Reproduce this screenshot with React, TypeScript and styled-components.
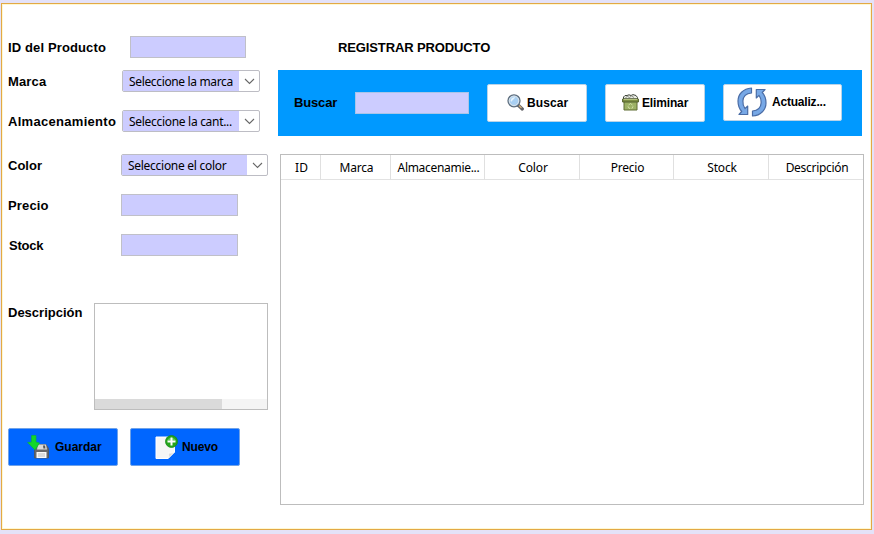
import React from "react";
import styled, { createGlobalStyle } from "styled-components";

const GlobalStyle = createGlobalStyle`
  *, *::before, *::after { box-sizing: border-box; }
  body { margin: 0; background: #e4e2f8; }
`;

const Desktop = styled.div`
  width: 874px;
  height: 534px;
  padding: 3px 2px 4px 1px;
  background: #e4e2f8;
  font-family: "Liberation Sans", Arial, sans-serif;
  color: #000;
`;

const Frame = styled.main`
  display: flex;
  width: 871px;
  height: 527px;
  border: 1px solid #e3a945;
  box-shadow: inset 0 0 0 1px #fff8d2;
  background: #fff;
`;

const FormColumn = styled.form`
  display: flex;
  flex-direction: column;
  flex: none;
  width: 276px;
  padding: 32px 0 0 6px;
`;

const FieldRow = styled.div<{ $gap?: number }>`
  display: flex;
  align-items: flex-start;
  margin-top: ${(p) => p.$gap ?? 0}px;
`;

const Label = styled.label<{ $width: number; $spacing?: number; $indent?: number; $line?: number }>`
  flex: none;
  width: ${(p) => p.$width}px;
  height: 22px;
  padding-left: ${(p) => p.$indent ?? 0}px;
  font-size: 13px;
  font-weight: bold;
  line-height: ${(p) => p.$line ?? 24}px;
  white-space: nowrap;
  letter-spacing: ${(p) => p.$spacing ?? 0}px;
`;

const TextField = styled.input<{ $width: number; $border?: string }>`
  flex: none;
  width: ${(p) => p.$width}px;
  height: 22px;
  padding: 0 6px;
  border: 1px solid ${(p) => p.$border ?? "#c0c0c8"};
  border-radius: 0;
  background: #ccccff;
  outline: none;
`;

const Combo = styled.div<{ $width: number }>`
  display: flex;
  flex: none;
  width: ${(p) => p.$width}px;
  height: 22px;
  border: 1px solid #bdbdc4;
  border-radius: 2px;
  background: #fff;
  overflow: hidden;
`;

const ComboValue = styled.span<{ $spacing: number }>`
  flex: 1;
  padding-left: 6px;
  background: #ccccff;
  font: 12px/21px "Noto Sans", "Open Sans", sans-serif;
  letter-spacing: ${(p) => p.$spacing}px;
  white-space: nowrap;
`;

const ComboArrow = styled.span`
  display: flex;
  align-items: center;
  justify-content: center;
  width: 20px;
`;

const DescriptionBox = styled.div`
  display: flex;
  flex-direction: column;
  justify-content: flex-end;
  width: 174px;
  height: 107px;
  border: 1px solid #bdbdbd;
  background: #fff;
`;

const ScrollTrack = styled.div`
  height: 10px;
  background: #f4f4f4;
`;

const ScrollThumb = styled.div`
  width: 127px;
  height: 10px;
  background: #dadada;
`;

const Actions = styled.div`
  display: flex;
  gap: 12px;
  margin-top: 18px;
`;

const Button = styled.button<{
  $width: number;
  $height?: number;
  $primary?: boolean;
  $left: number;
  $gap: number;
  $spacing?: number;
}>`
  display: flex;
  align-items: center;
  flex: none;
  width: ${(p) => p.$width}px;
  height: ${(p) => p.$height ?? 38}px;
  padding: 0 0 0 ${(p) => p.$left}px;
  gap: ${(p) => p.$gap}px;
  border: 1px solid ${(p) => (p.$primary ? "#6fa2e8" : "#b9d3e8")};
  border-radius: 2px;
  background: ${(p) => (p.$primary ? "#0066ff" : "#fff")};
  color: #000;
  font: bold 12px/16px "Liberation Sans", Arial, sans-serif;
  letter-spacing: ${(p) => p.$spacing ?? 0.1}px;
  white-space: nowrap;

  svg { flex: none; }
`;

const ListColumn = styled.section`
  display: flex;
  flex-direction: column;
  flex: none;
  width: 586px;
  padding-top: 32px;
`;

const Title = styled.h1`
  height: 22px;
  margin: 0 0 0 60px;
  font-size: 13px;
  font-weight: bold;
  line-height: 24px;
  letter-spacing: -0.12px;
`;

const SearchBar = styled.div`
  display: flex;
  align-items: center;
  width: 584px;
  height: 66px;
  margin-top: 12px;
  padding: 0 0 1px 16px;
  background: #0099ff;
`;

const Buttons = styled.div`
  display: flex;
  align-items: flex-start;
  gap: 18px;
  margin-left: 18px;
`;

const Table = styled.div`
  width: 584px;
  height: 351px;
  margin: 18px 0 0 2px;
  border: 1px solid #bdbdbd;
  background: #fff;
`;

const HeaderRow = styled.div`
  display: grid;
  grid-template-columns: 40px 70px 94px 95px 94px 95px 94px;
  height: 25px;
  border-bottom: 1px solid #e2e2e2;
`;

const HeaderCell = styled.div<{ $spacing: number }>`
  padding-left: 2px;
  border-right: 1px solid #e0e0e0;
  font: 12px/25px "Noto Sans", "Open Sans", sans-serif;
  letter-spacing: ${(p) => p.$spacing}px;
  text-align: center;
  white-space: nowrap;

  &:last-child { border-right: 0; }
`;

const Chevron = () => (
  <svg width="11" height="7" viewBox="0 0 11 7" fill="none" stroke="#686868" strokeWidth="1.1">
    <path d="M1 1 5.5 5.5 10 1" />
  </svg>
);

const SaveIcon = () => (
  <svg width="23" height="24" viewBox="0 0 23 24">
    <path d="M8 9.5h11l2.500 4V23H7.500V13Z" fill="#68686a" stroke="#555" strokeWidth=".8" />
    <path d="M11 9.500h8l1 5h-10Z" fill="#d9d9d9" />
    <path d="M16 10.500h2l.4 3h-2Z" fill="#555" />
    <rect x="9.500" y="17" width="10" height="6" fill="#fafafa" />
    <path d="M11 19h7M11 21h7" stroke="#bdbdbd" />
    <path d="M4.500 .5h4.500v6.500l3.500 1L8 15 .7 7.500l3.800-.5Z" fill="#13d629" stroke="#0bb43a" strokeWidth=".7" />
  </svg>
);

const NewIcon = () => (
  <svg width="23" height="25" viewBox="0 0 23 25">
    <path d="M1 2h18.500v15L13 23.500H1Z" fill="#f6f6f6" stroke="#fff" />
    <path d="M13 23.500c1-2 1-3.500.5-5.500 2 .5 4 0 6-1Z" fill="#d5d5d5" stroke="#fff" strokeWidth=".7" />
    <circle cx="16.500" cy="6.500" r="6" fill="#26a51d" stroke="#178b16" strokeWidth=".8" />
    <path d="M12 5.500a5 5 0 0 1 9 0" fill="#65c957" />
    <path d="M16.500 2.500v8M12.500 6.500h8" stroke="#fff" strokeWidth="2" />
  </svg>
);

const SearchIcon = () => (
  <svg width="17" height="17" viewBox="0 0 17 17">
    <path d="m11 11 4.300 4" stroke="#626266" strokeWidth="3.200" strokeLinecap="round" />
    <path d="m12 11.500 2.500 2.500" stroke="#d3ae79" strokeWidth="1.300" />
    <circle cx="7" cy="6.800" r="6" fill="#a9cdec" stroke="#5f6e7d" strokeWidth="1.300" />
    <circle cx="7" cy="6.800" r="4.700" fill="#a8cff2" stroke="#dde4ea" />
    <path d="M3.700 6.500C4 4.200 6 3 8.500 3.300L4 8Z" fill="#e4f2fc" />
  </svg>
);

const TrashIcon = () => (
  <svg width="17" height="17" viewBox="0 0 17 17">
    <path d="M1.500 5V3L3 1.500h2L7 .8l2 .7 2-.9 3 .9 1.500 2V5Z" fill="#e9ebe5" stroke="#3f453b" />
    <path d="m3.500 3.500 2-1 2 1 2-1.500 2.500 1.500" fill="none" stroke="#8b9085" />
    <path d="M2 7h13v9H2Z" fill="#9db266" stroke="#5e6d33" />
    <path d="M.6 5h15.800v3H.6Z" fill="#7e9045" stroke="#525f2d" />
    <path d="M1.500 5.500h14" stroke="#b5c47e" />
    <path d="M6.500 11.300 8.500 9.300l2 2M6 12.300l1 2h1.200M11 12.300l-.8 2H9.500" fill="none" stroke="#d6e2ac" strokeWidth=".9" />
  </svg>
);

const RefreshIcon = () => (
  <svg width="30" height="30" viewBox="0 0 30 30" fill="#77a8e6" stroke="#4a6ca5" strokeWidth="1.200" strokeLinejoin="round">
    <path d="M14.500 1C6 1.500 1 7.500 1 14c0 4.500 1.300 7.700 3.700 10.500L2 27.500h8.700v-8.500L8 21.700C6.300 19.500 5.700 17 5.900 14c.2-4.500 3.600-7.500 8.600-8Z" />
    <path d="M15.500 29C24 28.500 29 22.500 29 16c0-4-1.300-7.700-3.700-10.500L28 2.500h-8.700v8.500L22 8.300c1.700 2.200 2.300 4.700 2.100 7.700-.2 4.500-3.600 7.500-8.600 8Z" />
  </svg>
);

const columns = [
  { name: "ID", spacing: 0 },
  { name: "Marca", spacing: -0.2 },
  { name: "Almacenamie...", spacing: -0.3 },
  { name: "Color", spacing: -0.1 },
  { name: "Precio", spacing: -0.2 },
  { name: "Stock", spacing: -0.2 },
  { name: "Descripción", spacing: -0.3 },
];

interface SelectProps {
  width: number;
  value: string;
  spacing: number;
}

const Select = ({ width, value, spacing }: SelectProps) => (
  <Combo $width={width}>
    <ComboValue $spacing={spacing}>{value}</ComboValue>
    <ComboArrow><Chevron /></ComboArrow>
  </Combo>
);

export default function App() {
  return (
    <Desktop>
      <GlobalStyle />
      <Frame>
        <FormColumn>
          <FieldRow>
            <Label $width={122} $spacing={0.13}>ID del Producto</Label>
            <TextField $width={116} />
          </FieldRow>
          <FieldRow $gap={12}>
            <Label $width={114} $spacing={0.15}>Marca</Label>
            <Select width={138} value="Seleccione la marca" spacing={-0.35} />
          </FieldRow>
          <FieldRow $gap={18}>
            <Label $width={114} $spacing={0.3}>Almacenamiento</Label>
            <Select width={138} value="Seleccione la cant..." spacing={-0.3} />
          </FieldRow>
          <FieldRow $gap={22}>
            <Label $width={113}>Color</Label>
            <Select width={147} value="Seleccione el color" spacing={-0.28} />
          </FieldRow>
          <FieldRow $gap={18}>
            <Label $width={113} $spacing={0.15}>Precio</Label>
            <TextField $width={117} />
          </FieldRow>
          <FieldRow $gap={18}>
            <Label $width={113} $indent={1} $spacing={-0.2}>Stock</Label>
            <TextField $width={117} />
          </FieldRow>
          <FieldRow $gap={47}>
            <Label as="span" $width={86} $line={20}>Descripción</Label>
            <DescriptionBox>
              <ScrollTrack><ScrollThumb /></ScrollTrack>
            </DescriptionBox>
          </FieldRow>
          <Actions>
            <Button type="button" $width={110} $primary $left={18} $gap={5} $spacing={0}><SaveIcon />Guardar</Button>
            <Button type="button" $width={110} $primary $left={24} $gap={4} $spacing={-0.15}><NewIcon />Nuevo</Button>
          </Actions>
        </FormColumn>
        <ListColumn>
          <Title>REGISTRAR PRODUCTO</Title>
          <SearchBar>
            <Label $width={61} $line={22} $spacing={-0.15}>Buscar</Label>
            <TextField $width={114} $border="#a9c5e8" />
            <Buttons>
              <Button type="button" $width={100} $left={19} $gap={3}><SearchIcon />Buscar</Button>
              <Button type="button" $width={100} $left={16} $gap={3} $spacing={-0.15}><TrashIcon />Eliminar</Button>
              <Button type="button" $width={119} $height={37} $left={13} $gap={5} $spacing={-0.2}><RefreshIcon />Actualiz...</Button>
            </Buttons>
          </SearchBar>
          <Table>
            <HeaderRow>
              {columns.map((c) => (
                <HeaderCell key={c.name} $spacing={c.spacing}>{c.name}</HeaderCell>
              ))}
            </HeaderRow>
          </Table>
        </ListColumn>
      </Frame>
    </Desktop>
  );
}
